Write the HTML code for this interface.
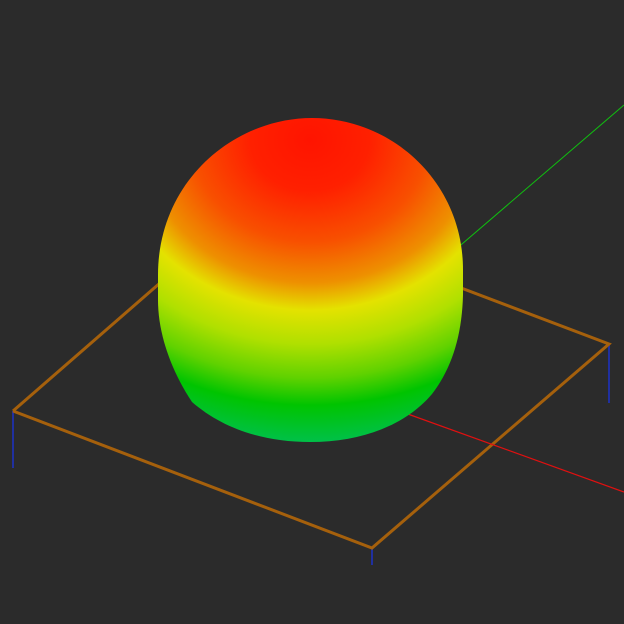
<!DOCTYPE html>
<html><head><style>html,body{margin:0;padding:0;background:#2b2b2b;}svg{display:block}</style></head>
<body>
<svg width="624" height="624" viewBox="0 0 624 624" xmlns="http://www.w3.org/2000/svg">
<rect width="624" height="624" fill="#2b2b2b"/>
<defs>
<radialGradient id="g" gradientUnits="userSpaceOnUse" cx="310" cy="140" r="340" gradientTransform="translate(310 140) scale(1.16 1) translate(-310 -140)">
<stop offset="0" stop-color="#ff1400"/>
<stop offset="0.15" stop-color="#ff2000"/>
<stop offset="0.3" stop-color="#f85000"/>
<stop offset="0.42" stop-color="#ee9000"/>
<stop offset="0.5" stop-color="#e4e200"/>
<stop offset="0.6" stop-color="#b0e000"/>
<stop offset="0.7" stop-color="#60d200"/>
<stop offset="0.78" stop-color="#00c400"/>
<stop offset="0.9" stop-color="#00c050"/>
<stop offset="1" stop-color="#00c070"/>
</radialGradient>
</defs>
<g stroke="#2030a0" stroke-width="2">
<line x1="13" y1="411" x2="13" y2="468"/>
<line x1="372" y1="548" x2="372" y2="565"/>
<line x1="609" y1="344" x2="609" y2="403"/>
</g>
<polyline points="13,411 372,548 609,344 440,280 160,283 13,411" fill="none" stroke="#a5600c" stroke-width="3"/>
<line x1="455" y1="250" x2="624" y2="105" stroke="#10c010" stroke-width="1"/>
<line x1="405" y1="413" x2="624" y2="492" stroke="#e01010" stroke-width="1.2"/>
<path d="M158,275 C158,180 235,118 312,118 C392,118 463,182 463,270 L463,295 C462,335 452,368 432,394 C405,426 360,442 310,442 C262,442 222,428 192,402 C172,372 158,335 158,300 Z" fill="url(#g)"/>
</svg>
</body></html>
